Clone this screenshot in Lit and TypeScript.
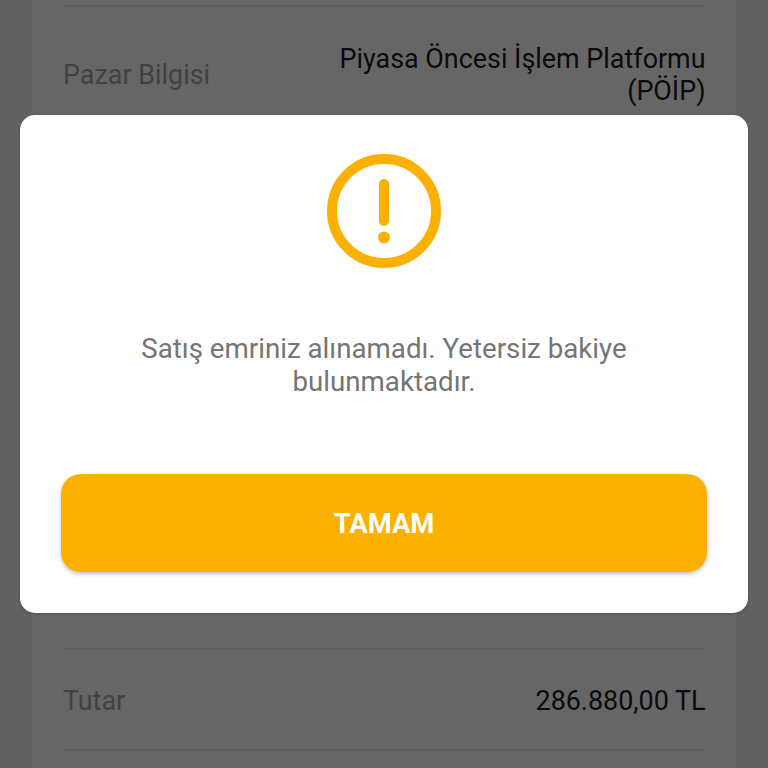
import { LitElement, html, css } from "lit";
import { customElement, property } from "lit/decorators.js";

@customElement("order-row")
class OrderRow extends LitElement {
  @property() label = "";
  @property() value = "";

  static styles = css`
    :host {
      display: flex;
      justify-content: space-between;
      align-items: center;
      box-sizing: border-box;
      border-top: 2px solid #e8e8e8;
      font-size: 26.9px;
      line-height: 32px;
    }

    .label {
      margin-left: -1px;
      color: #a6a6a6;
      white-space: nowrap;
    }

    .value {
      max-width: 380px;
      margin-right: -0.5px;
      color: #1c1c1c;
      text-align: right;
    }
  `;

  render() {
    return html`
      <span class="label">${this.label}</span>
      <span class="value">${this.value}</span>
    `;
  }
}

@customElement("alert-dialog")
class AlertDialog extends LitElement {
  @property() message = "";
  @property() action = "";

  static styles = css`
    :host {
      display: flex;
      flex-direction: column;
      align-items: center;
      box-sizing: border-box;
      width: 728px;
      height: 498px;
      padding: 39px 41px 41px;
      border-radius: 15px;
      background: white;
      box-shadow: 0 1px 3px #00000030;
    }

    svg {
      display: block;
      width: 114px;
      height: 114px;
    }

    p {
      width: 520px;
      margin: 64px 0 0;
      color: #757575;
      font-size: 27.7px;
      line-height: 33px;
      text-align: center;
    }

    button {
      width: 646px;
      height: 98px;
      margin-top: auto;
      padding: 2px 0 0;
      border: none;
      border-radius: 20px;
      background: #fcb000;
      color: white;
      font: bold 27.4px Roboto, sans-serif;
      box-shadow: 0 2px 4px #00000040;
    }
  `;

  render() {
    return html`
      <svg viewBox="0 0 114 114" fill="none" stroke="#fcb000" stroke-width="10">
        <circle cx="57" cy="57" r="52" />
        <path d="M57 30V67" stroke-linecap="round" />
        <circle cx="57" cy="83.5" r="6" fill="#fcb000" stroke="none" />
      </svg>
      <p>${this.message}</p>
      <button>${this.action}</button>
    `;
  }
}

@customElement("app-root")
class AppRoot extends LitElement {
  static styles = css`
    :host {
      display: grid;
      width: 768px;
      height: 768px;
      overflow: hidden;
      font-family: Roboto, sans-serif;
    }

    .page,
    .overlay {
      grid-area: 1 / 1;
      box-sizing: border-box;
    }

    .page {
      padding: 0 32px;
      background: #f2f2f2;
    }

    .card {
      display: flex;
      flex-direction: column;
      justify-content: space-between;
      box-sizing: border-box;
      height: 768px;
      padding: 5px 31px 17px 32px;
      background: white;
    }

    .market {
      height: 137px;
    }

    .total {
      height: 103px;
      padding-top: 2px;
      border-bottom: 2px solid #e8e8e8;
    }

    .overlay {
      display: flex;
      justify-content: center;
      align-items: flex-start;
      padding-top: 115px;
      background: #00000099;
      z-index: 1;
    }
  `;

  render() {
    return html`
      <div class="page">
        <div class="card">
          <order-row class="market" label="Pazar Bilgisi" value="Piyasa Öncesi İşlem Platformu (PÖİP)"></order-row>
          <order-row class="total" label="Tutar" value="286.880,00 TL"></order-row>
        </div>
      </div>
      <div class="overlay">
        <alert-dialog
          message="Satış emriniz alınamadı. Yetersiz bakiye bulunmaktadır."
          action="TAMAM"
        ></alert-dialog>
      </div>
    `;
  }
}
